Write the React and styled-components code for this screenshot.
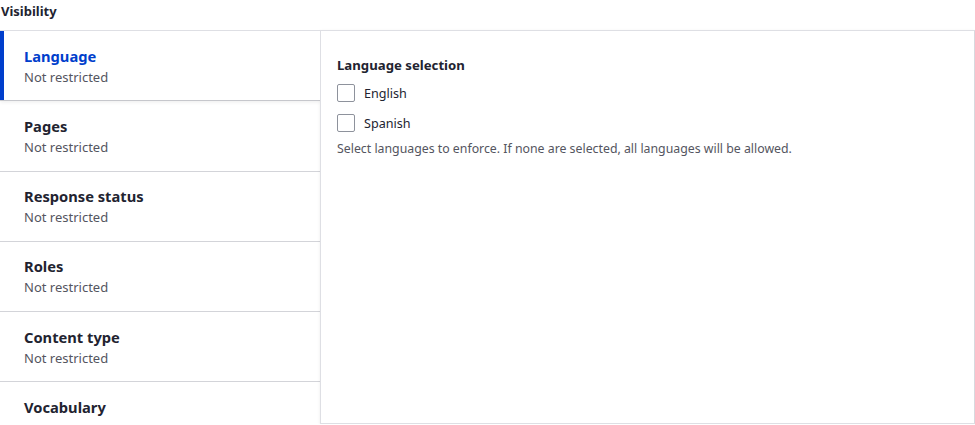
import React from 'react'
import styled, { createGlobalStyle } from 'styled-components'

const GlobalStyle = createGlobalStyle`
  html, body {
    margin: 0;
    padding: 0;
    background: #ffffff;
    overflow: hidden;
  }
  body {
    font-family: "Noto Sans", "Open Sans", sans-serif;
    color: #222330;
  }
`

const Fieldset = styled.div`
  width: 975px;
`

const Legend = styled.div`
  height: 30px;
  padding: 1px 0 0 1px;
  box-sizing: border-box;
  font-size: 13px;
  font-weight: 700;
  line-height: 20px;
  color: #222330;
`

const Tabs = styled.div`
  display: flex;
  align-items: flex-start;
`

const Menu = styled.ul`
  list-style: none;
  margin: 0;
  padding: 0;
  width: 320px;
  flex: 0 0 320px;
  height: 392px;
  overflow: hidden;
`

const MenuItem = styled.li`
  position: relative;
  padding: 13.65px 24px;
  background: #ffffff;
  border-top: 1px solid ${({ active }) => (active ? '#dedfe4' : '#d3d4d9')};
  ${({ active }) =>
    active &&
    `
    z-index: 2;
    margin-right: -1px;
    box-shadow: 0 2px 4px rgba(0, 0, 0, 0.08);
    &::before {
      content: '';
      position: absolute;
      left: 0;
      top: 0;
      bottom: 0;
      width: 4px;
      background: #003ecc;
    }
  `}
`

const TabTitle = styled.div`
  font-size: 14.7px;
  font-weight: 700;
  line-height: 22px;
  color: ${({ active }) => (active ? '#003ecc' : '#222330')};
`

const TabSummary = styled.div`
  font-size: 13px;
  line-height: 20px;
  color: #545560;
`

const Pane = styled.div`
  position: relative;
  z-index: 1;
  flex: 1;
  min-height: 394px;
  box-sizing: border-box;
  border: 1px solid #dedfe4;
  border-right-color: #d8d9de;
  box-shadow: 0 1px 3px rgba(0, 0, 0, 0.08);
  padding: 24px 16px;
`

const FieldLabel = styled.div`
  font-size: 13.2px;
  font-weight: 700;
  line-height: 20px;
  color: #222330;
`

const Options = styled.div`
  display: flex;
  flex-direction: column;
  gap: 4px;
  margin-top: 5px;
`

const Option = styled.label`
  display: flex;
  align-items: center;
  gap: 9px;
  height: 26px;
  font-size: 12.6px;
  color: #222330;
`

const Box = styled.span`
  width: 18px;
  height: 18px;
  box-sizing: border-box;
  border: 1px solid #8e929c;
  border-radius: 2px;
  background: #ffffff;
`

const Description = styled.div`
  margin-top: 3px;
  font-size: 12.32px;
  line-height: 20px;
  color: #545560;
`

const tabs = [
  { title: 'Language', summary: 'Not restricted' },
  { title: 'Pages', summary: 'Not restricted' },
  { title: 'Response status', summary: 'Not restricted' },
  { title: 'Roles', summary: 'Not restricted' },
  { title: 'Content type', summary: 'Not restricted' },
  { title: 'Vocabulary', summary: 'Not restricted' },
]

const App = () => (
  <>
    <GlobalStyle />
    <Fieldset>
      <Legend>Visibility</Legend>
      <Tabs>
        <Menu>
          {tabs.map((tab, i) => (
            <MenuItem key={tab.title} active={i === 0}>
              <TabTitle active={i === 0}>{tab.title}</TabTitle>
              <TabSummary>{tab.summary}</TabSummary>
            </MenuItem>
          ))}
        </Menu>
        <Pane>
          <FieldLabel>Language selection</FieldLabel>
          <Options>
            <Option>
              <Box />
              English
            </Option>
            <Option>
              <Box />
              Spanish
            </Option>
          </Options>
          <Description>
            Select languages to enforce. If none are selected, all languages will be allowed.
          </Description>
        </Pane>
      </Tabs>
    </Fieldset>
  </>
)

export default App
